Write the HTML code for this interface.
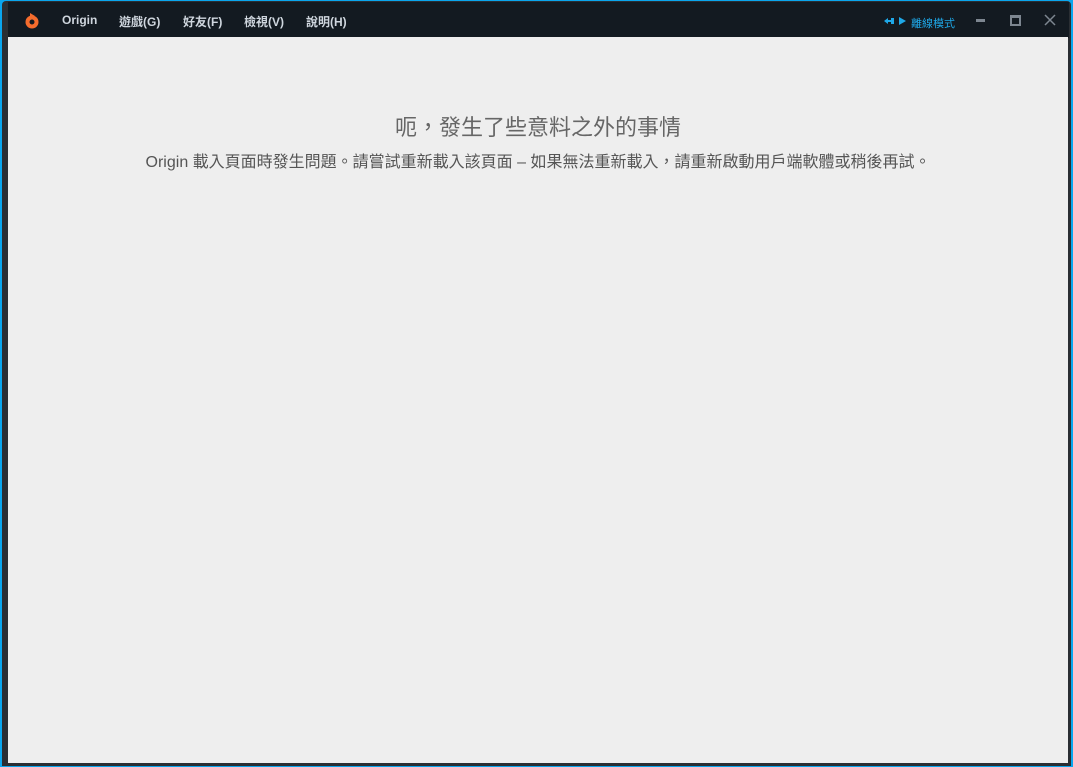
<!DOCTYPE html>
<html><head><meta charset="utf-8"><style>
html,body{margin:0;padding:0;width:1073px;height:767px;overflow:hidden;background:#0aa6ee;}
.win{position:absolute;left:2px;top:1px;width:1069px;height:765px;background:#2a2e33;border-radius:4px 4px 0 0;}
.tb{position:absolute;left:6px;top:1px;right:2px;height:36px;background:#131a21;}
.content{position:absolute;left:8px;top:37px;width:1060px;height:726px;background:#eeeeee;}
.menu{position:absolute;top:11px;font:bold 12px "Liberation Sans","Noto Sans CJK TC",sans-serif;color:#cfd6de;}
h1{position:absolute;top:73px;left:0;width:1060px;text-align:center;margin:0;font:22px "Liberation Sans","Noto Sans CJK TC",sans-serif;color:#666;}
p{position:absolute;top:111px;left:0;width:1060px;text-align:center;margin:0;font:16px "Liberation Sans","Noto Sans CJK TC",sans-serif;color:#555;}
</style></head><body>
<div class="win">
<div class="tb">
<svg style="position:absolute;left:16px;top:10px" width="16" height="18" viewBox="0 0 16 18"><circle cx="8" cy="10" r="6.5" fill="#f56c2d"/><path d="M6 1 L11 4 L6 5 Z" fill="#f56c2d"/><circle cx="8" cy="10" r="2.5" fill="#131a21"/></svg>
<span class="menu" style="left:54px">Origin</span>
<span class="menu" style="left:111px">遊戲(G)</span>
<span class="menu" style="left:175px">好友(F)</span>
<span class="menu" style="left:236px">檢視(V)</span>
<span class="menu" style="left:298px">說明(H)</span>
<svg style="position:absolute;left:876px;top:15px" width="24" height="8" viewBox="0 0 24 8"><path d="M0 4 L4 1 L4 3 L7 3 L7 1 L10 1 L10 7 L7 7 L7 5 L4 5 L4 7 Z" fill="#1ea8e8"/><path d="M15 0 L15 8 L22 4 Z" fill="#1ea8e8"/></svg>
<span style="position:absolute;left:903px;top:13px;font:11px 'Liberation Sans','Noto Sans CJK TC',sans-serif;color:#1ea8e8">離線模式</span>
<div style="position:absolute;left:968px;top:17px;width:9px;height:3px;background:#7d8690"></div>
<div style="position:absolute;left:1002px;top:13px;width:7px;height:6px;border:2px solid #7d8690;border-top-width:3px"></div>
<svg style="position:absolute;left:1036px;top:12px" width="12" height="12"><path d="M1 1 L11 11 M11 1 L1 11" stroke="#7d8690" stroke-width="1.5"/></svg>
</div>
</div>
<div class="content">
<h1>呃，發生了些意料之外的事情</h1>
<p>Origin 載入頁面時發生問題。請嘗試重新載入該頁面 – 如果無法重新載入，請重新啟動用戶端軟體或稍後再試。</p>
</div>
</body></html>
